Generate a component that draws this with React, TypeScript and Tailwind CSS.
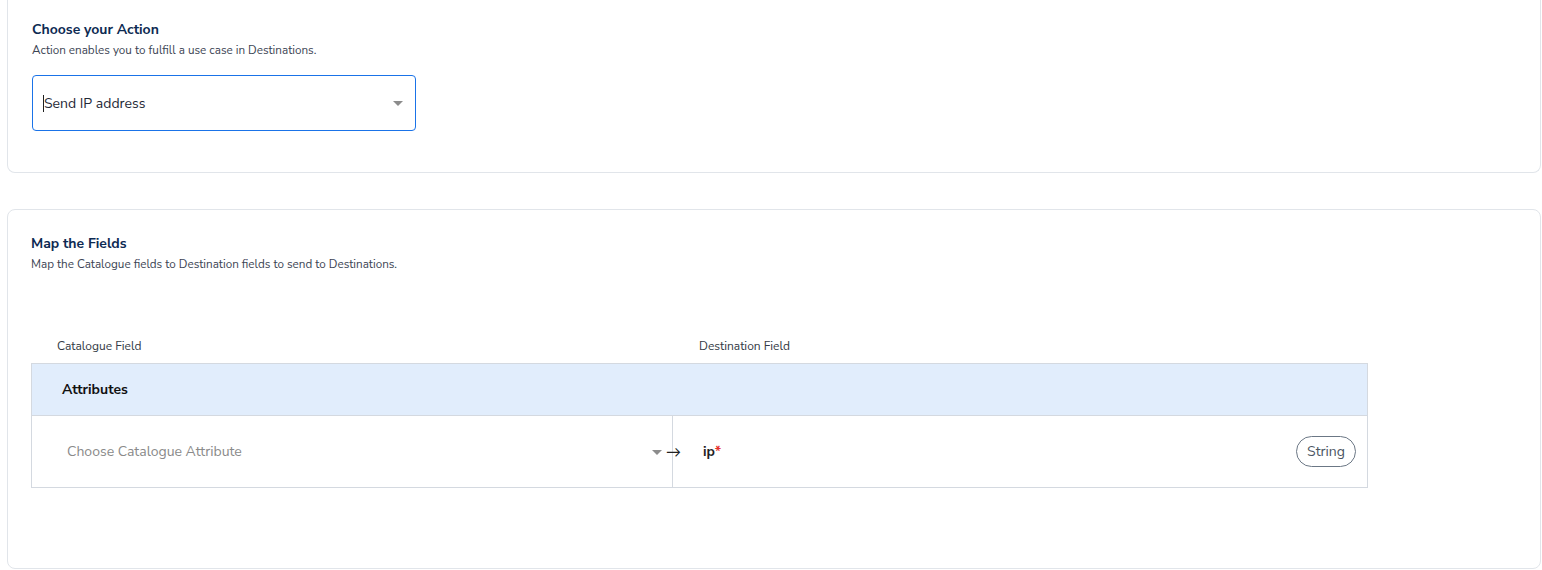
import React from "react";

const font = { fontFamily: '"Nunito Sans", Lato, "Noto Sans", sans-serif' };

function Caret({ className }: { className?: string }) {
  return (
    <svg width="10" height="5" viewBox="0 0 10 5" className={className}>
      <path d="M0 0 L10 0 L5 5 Z" fill="#8c8c8c" />
    </svg>
  );
}

function CardHeading({ title, subtitle }: { title: string; subtitle: string }) {
  return (
    <div>
      <h2 className="text-[14px] font-bold leading-[18px] text-[#0d2a52]">{title}</h2>
      <p className="mt-[4px] text-[11.7px] leading-[15px] text-[#3c4554]">{subtitle}</p>
    </div>
  );
}

export default function App() {
  return (
    <div className="min-h-[570px] bg-white pl-[7px] pr-[1px]" style={font}>
      <section className="h-[173px] rounded-b-lg border-x border-b border-[#e1e5ea] px-[24px] pt-[21px]">
        <CardHeading title="Choose your Action" subtitle="Action enables you to fulfill a use case in Destinations." />
        <div className="mt-[17px] flex h-[56px] w-[384px] items-center rounded-[4px] border border-[#1a73e8] pl-[10px] pr-[12px]">
          <span className="h-[17px] w-px bg-[#1f1f1f]" />
          <span className="flex-1 text-[14px] text-[#1f2937]">Send IP address</span>
          <Caret />
        </div>
      </section>

      <section className="mt-[36px] h-[360px] rounded-lg border border-[#e1e5ea] px-[23px] pt-[25px]">
        <CardHeading title="Map the Fields" subtitle="Map the Catalogue fields to Destination fields to send to Destinations." />
        <div className="mt-[66px] w-[1337px]">
          <div className="grid grid-cols-[641px_1fr] pb-[9px] text-[12px] leading-[16px] text-[#333a45]">
            <span className="pl-[26px]">Catalogue Field</span>
            <span className="pl-[27px]">Destination Field</span>
          </div>
          <div className="border border-[#d4d9e0]">
            <div className="flex h-[52px] items-center border-b border-[#d4d9e0] bg-[#e1edfc] pl-[30px] text-[14px] font-bold text-[#111]">
              Attributes
            </div>
            <div className="grid h-[71px] grid-cols-[641px_1fr]">
              <div className="relative flex items-center border-r border-[#d4d9e0] pl-[35px] pr-[10px]">
                <span className="flex-1 text-[14px] text-[#8a8a8a]">Choose Catalogue Attribute</span>
                <Caret className="mt-[1px]" />
                <span className="absolute right-[-9px] top-1/2 -translate-y-1/2 text-[15px] leading-none text-[#222]">→</span>
              </div>
              <div className="flex items-center pl-[30px] pr-[11px]">
                <span className="flex-1 text-[14px] font-bold text-[#1f1f1f]">
                  ip<span className="text-[#e5322d]">*</span>
                </span>
                <span className="flex h-[31px] items-center rounded-full border border-[#6b7785] px-[10px] text-[14px] text-[#4b5563]">
                  String
                </span>
              </div>
            </div>
          </div>
        </div>
      </section>
    </div>
  );
}
